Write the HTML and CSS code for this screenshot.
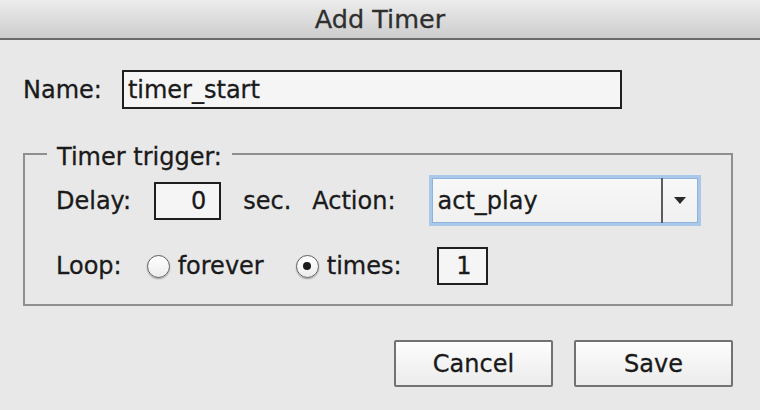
FILE: index.html
```html
<!DOCTYPE html>
<html>
<head>
<meta charset="utf-8">
<title>Add Timer</title>
<link rel="stylesheet" href="styles.css">
</head>
<body>
<div class="window">
  <div class="titlebar">Add Timer</div>
  <div class="content">
    <div class="row name-row">
      <label class="lbl" for="name">Name:</label>
      <input id="name" class="field name-field" type="text" value="timer_start">
    </div>
    <fieldset class="group">
      <legend class="legend">Timer trigger:</legend>
      <div class="row delay-row">
        <span class="lbl">Delay:</span>
        <input class="field num delay-field" type="text" value="0">
        <span class="sec">sec.</span>
        <span class="action-lbl">Action:</span>
        <div class="select">
          <span class="select-value">act_play</span>
          <span class="select-btn"><svg width="12" height="7" viewBox="0 0 12 7"><path d="M0 0H12L6 7Z" fill="#2b2b2b"/></svg></span>
        </div>
      </div>
      <div class="row loop-row">
        <span class="lbl">Loop:</span>
        <span class="radio radio-first"></span><span class="radio-lbl">forever</span>
        <span class="radio radio-second checked"></span><span class="radio-lbl">times:</span>
        <input class="field num times-field" type="text" value="1">
      </div>
    </fieldset>
    <div class="buttons">
      <button class="btn" type="button">Cancel</button>
      <button class="btn" type="button">Save</button>
    </div>
  </div>
</div>
</body>
</html>
```
FILE: styles.css
```css
* { box-sizing: border-box; }
html, body { margin: 0; padding: 0; }
body {
  width: 760px;
  height: 410px;
  overflow: hidden;
  background: #e8e8e8;
  font-family: "DejaVu Sans", sans-serif;
  font-size: 24px;
  color: #1a1a1a;
  -webkit-text-stroke: 0.3px currentColor;
}
.titlebar {
  height: 40px;
  border-bottom: 2px solid #6b6b6b;
  background: linear-gradient(#ececec, #cdcdcd);
  text-align: center;
  line-height: 38px;
  font-size: 25.5px;
  color: #2f2f2f;
}
.content { padding: 30px 27px 0 23px; }
.row { display: flex; align-items: center; }
.field {
  font: inherit;
  color: inherit;
  -webkit-text-stroke: 0.3px currentColor;
  border: 2px solid #1f1f1f;
  background: #f5f5f5;
  margin: 0;
  outline: none;
  border-radius: 0;
}
.name-field { margin-left: 20px; width: 500px; height: 39px; padding: 0 4px; }
.group {
  margin: 27px 0 0 0;
  border: 2px solid #8f8f8f;
  padding: 4px 22px 19px 31px;
  min-width: 0;
}
.legend {
  margin-left: -9px;
  padding: 8px 10px 0 10px;
  line-height: 27px;
}
.delay-row { height: 51px; }
.num { text-align: right; padding: 0 13px 0 0; height: 38px; }
.delay-field { margin-left: 23px; width: 67px; }
.sec { margin-left: 22px; }
.action-lbl { margin-left: 21px; }
.select {
  margin-left: 33px;
  width: 272px;
  height: 51px;
  border: 3px solid #a9c8ea;
  box-shadow: inset 0 0 0 1px #8fb3dc;
  background: linear-gradient(#f8f8f8, #f0f0f0);
  display: flex;
  align-items: stretch;
}
.select-value { flex: 1; padding-left: 6px; display: flex; align-items: center; }
.select-btn {
  width: 37px;
  border-left: 2px solid #5c5c5c;
  display: flex;
  align-items: center;
  justify-content: center;
}
.loop-row { margin-top: 21px; height: 38px; }
.radio {
  width: 23px;
  height: 23px;
  border-radius: 50%;
  border: 1.5px solid #5f5f5f;
  background: linear-gradient(#ffffff, #ececec);
  box-shadow: 0 1px 1.5px rgba(0,0,0,0.3);
  display: grid;
  place-items: center;
}
.radio.checked::after {
  content: "";
  width: 8px;
  height: 8px;
  border-radius: 50%;
  background: #1a1a1a;
}
.radio-first { margin-left: 25px; }
.radio-second { margin-left: 32px; }
.radio-lbl { margin-left: 8px; }
.times-field { margin-left: 35px; width: 51px; padding-right: 14px; }
.buttons {
  display: flex;
  justify-content: flex-end;
  gap: 21px;
  margin-top: 34px;
}
.btn {
  font: inherit;
  color: #1a1a1a;
  -webkit-text-stroke: 0.3px currentColor;
  width: 159px;
  height: 47px;
  border: 2px solid #727272;
  border-radius: 2px;
  background: linear-gradient(#fdfdfd, #ebebeb);
  padding: 0;
  margin: 0;
}
```
